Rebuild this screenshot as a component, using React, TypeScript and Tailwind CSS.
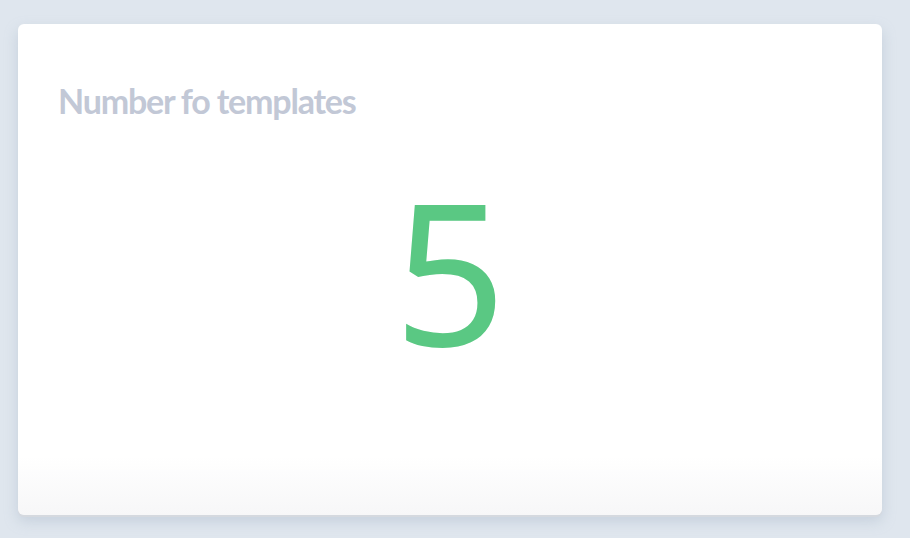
export default function App() {
  return (
    <div className="min-h-screen w-full bg-[#dfe6ee] pt-6 pl-[18px] pr-[28px] pb-6">
      <div className="h-[491px] w-[864px] rounded-md bg-gradient-to-b from-white from-[88%] to-[#f7f7f8] shadow-[0_2px_0_#d5d9df,0_6px_14px_rgba(150,165,185,0.35)]">
        <div className="px-[40px] pt-[60px]">
          <h2
            className="text-[34px] leading-none font-bold tracking-[-1.2px] text-[#c2c8d6]"
            style={{ fontFamily: 'Lato, "Noto Sans", sans-serif' }}
          >
            Number fo templates
          </h2>
        </div>
        <div
          className="mt-[53px] text-center text-[197px] leading-none font-normal text-[#5ac883]"
          style={{ fontFamily: '"Noto Sans", sans-serif' }}
        >
          5
        </div>
      </div>
    </div>
  );
}
